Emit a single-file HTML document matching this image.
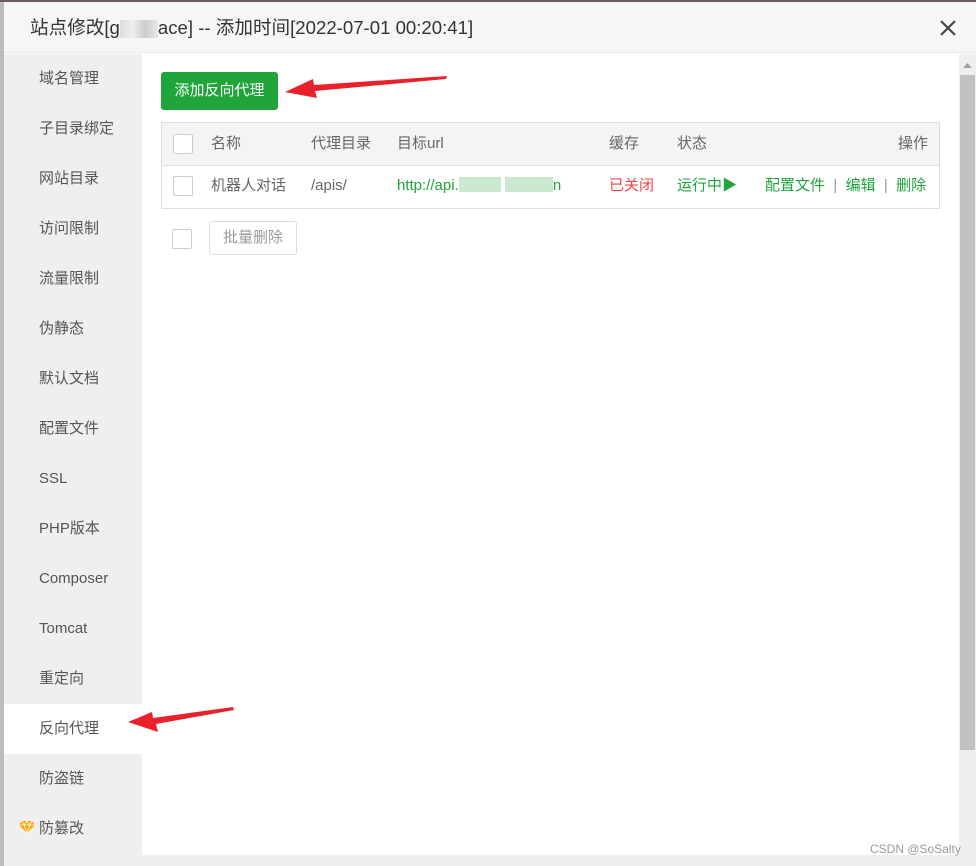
<!DOCTYPE html>
<html><head><meta charset="utf-8"><style>
*{margin:0;padding:0;box-sizing:border-box}
body{width:976px;height:866px;overflow:hidden;background:#fff;font-family:"Liberation Sans","Noto Sans CJK SC",sans-serif;font-size:15px;color:#555;position:relative}
.leftedge{position:absolute;left:0;top:0;width:4px;height:866px;background:#bcbcbc}
.topline{position:absolute;left:0;top:0;width:976px;height:2px;background:#6b5a60}
.title{position:absolute;left:4px;top:2px;width:972px;height:51px;background:#f6f6f6;border-bottom:1px solid #e8e8e8;font-size:18.6px;color:#333;line-height:51px;padding-left:26px}
.blur{display:inline-block;width:38px;height:18px;background:linear-gradient(90deg,#ddd,#eee,#ccc,#e8e8e8);vertical-align:middle}
.close{position:absolute;left:938px;top:18px;width:20px;height:20px}
.side{position:absolute;left:4px;top:54px;width:138px;height:801px;background:#efefef}
.side div{height:50px;line-height:50px;padding-left:35px;color:#555;font-size:15px}
.side div.act{background:#fff}
.content{position:absolute;left:142px;top:54px;width:817px;height:801px;background:#fff}
.vs{position:absolute;left:959px;top:54px;width:17px;height:801px;background:#efefef}
.thumb{position:absolute;left:960px;top:75px;width:15px;height:675px;background:#c1c1c1}
.hs{position:absolute;left:4px;top:855px;width:972px;height:11px;background:#efefef}
.btn{position:absolute;left:161px;top:72px;width:117px;height:38px;background:#20a53a;border-radius:3px;color:#fff;font-size:15px;line-height:38px;text-align:center}
.tbl{position:absolute;left:161px;top:122px;width:779px;height:87px;border:1px solid #ddd}
.th{position:absolute;left:0;top:0;width:777px;height:43px;background:#f4f4f4;border-bottom:1px solid #e2e2e2}
.cb{position:absolute;width:20px;height:20px;border:1px solid #ccc;border-radius:2px;background:#fff}
.t{position:absolute;font-size:15px;line-height:20px;white-space:nowrap}
.g{color:#20a53a}.r{color:#ef4444}
.bd{position:absolute;left:209px;top:221px;width:88px;height:34px;border:1px solid #ddd;border-radius:3px;color:#999;text-align:center;line-height:32px;font-size:15px}
.wm{position:absolute;left:870px;top:842px;font-size:12px;color:#999}
</style></head><body>
<div class="leftedge"></div>
<div class="topline"></div>
<div class="title">站点修改[g<span class="blur"></span>ace] -- 添加时间[2022-07-01 00:20:41]</div>
<svg class="close" viewBox="0 0 20 20"><path d="M3 3L17 17M17 3L3 17" stroke="#444" stroke-width="2.2"/></svg>
<div class="side">
<div>域名管理</div><div>子目录绑定</div><div>网站目录</div><div>访问限制</div><div>流量限制</div><div>伪静态</div><div>默认文档</div><div>配置文件</div><div>SSL</div><div>PHP版本</div><div>Composer</div><div>Tomcat</div><div>重定向</div><div class="act">反向代理</div><div>防盗链</div><div style="padding-left:14px"><svg width="18" height="14" viewBox="0 0 18 14" style="vertical-align:-1px;margin-right:3px"><path d="M4 1H14L17 5L9 13L1 5Z" fill="#f5a400"/><path d="M1 5H17M6 5L9 13L12 5M4 1L6 5L9 1L12 5L14 1" stroke="#fff" stroke-width="0.8" fill="none"/></svg>防篡改</div>
</div>
<div class="content"></div>
<div class="vs"></div>
<svg style="position:absolute;left:962px;top:62px" width="11" height="8"><path d="M1 6L5.5 1L10 6Z" fill="#a0a0a0"/></svg>
<div class="thumb"></div>
<div class="hs"></div>
<div class="btn">添加反向代理</div>
<div class="tbl">
<div class="th"></div>
<div class="cb" style="left:11px;top:11px"></div>
<span class="t" style="left:49px;top:11px;color:#666">名称</span>
<span class="t" style="left:149px;top:11px;color:#666">代理目录</span>
<span class="t" style="left:235px;top:11px;color:#666">目标url</span>
<span class="t" style="left:447px;top:11px;color:#666">缓存</span>
<span class="t" style="left:515px;top:11px;color:#666">状态</span>
<span class="t" style="left:736px;top:11px;color:#666">操作</span>
<div class="cb" style="left:11px;top:53px"></div>
<span class="t" style="left:49px;top:53px;color:#666">机器人对话</span>
<span class="t" style="left:149px;top:53px;color:#666">/apis/</span>
<span class="t g" style="left:235px;top:53px">http://api.<span style="display:inline-block;width:42px;height:15px;background:#cbe9d0;vertical-align:-2px"></span> <span style="display:inline-block;width:48px;height:15px;background:#cbe9d0;vertical-align:-2px"></span>n</span>
<span class="t r" style="left:447px;top:53px">已关闭</span>
<span class="t g" style="left:515px;top:53px">运行中▶</span>
<span class="t g" style="left:603px;top:53px">配置文件 <span style="color:#999">&nbsp;|&nbsp;</span> 编辑 <span style="color:#999">&nbsp;|&nbsp;</span> 删除</span>
</div>
<div class="cb" style="left:172px;top:229px"></div>
<div class="bd">批量删除</div>
<svg style="position:absolute;left:283px;top:74px" width="166" height="28"><path d="M164 2L163 5L32 17L34 24L2 18L30 5L31 11Z" fill="#e8212a"/></svg>
<svg style="position:absolute;left:126px;top:705px" width="110" height="30"><path d="M107 2L108 5L30 19L32 27L2 17L26 7L27 13Z" fill="#e8212a"/></svg>
<div class="wm">CSDN @SoSalty</div>
</body></html>
